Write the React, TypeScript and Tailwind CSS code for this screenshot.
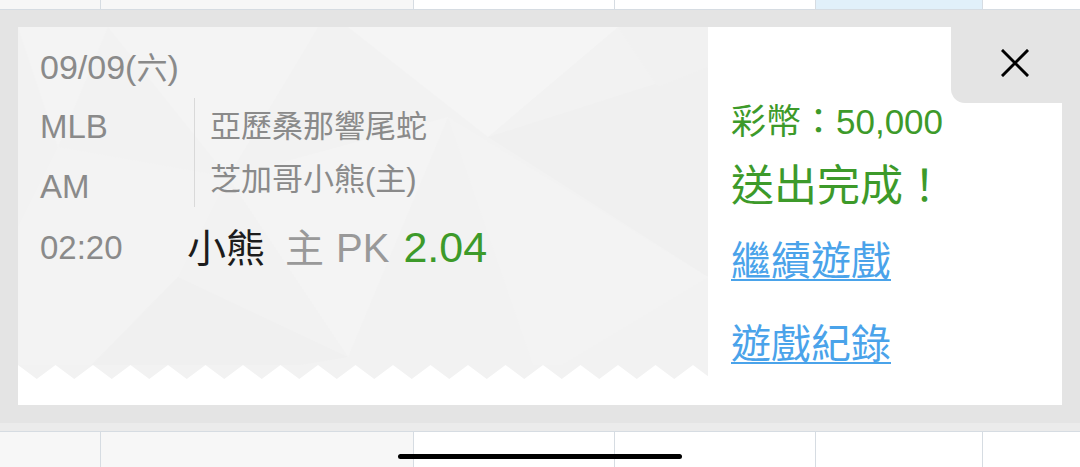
import React from "react";

const font = { fontFamily: '"Liberation Sans", "Noto Sans CJK TC", sans-serif' };

const topCells = [
  "w-[100px] bg-[#f7f7f7]",
  "w-[313px] bg-[#f7f7f7] border-l border-[#d6dce2]",
  "w-[201px] bg-white border-l border-[#d6dce2]",
  "w-[201px] bg-white border-l border-[#d6dce2]",
  "w-[167px] bg-[#e1f0fa] border-l border-[#d6dce2]",
  "flex-1 bg-white border-l border-[#d6dce2]",
];

const bottomCells = [
  "w-[100px] bg-[#f7f7f7]",
  "w-[313px] bg-[#f7f7f7] border-l border-[#d6dce2]",
  "w-[201px] bg-white border-l border-[#d6dce2]",
  "w-[201px] bg-white border-l border-[#d6dce2]",
  "w-[167px] bg-white border-l border-[#d6dce2]",
  "flex-1 bg-white border-l border-[#d6dce2]",
];

// faint low-poly texture behind the ticket
function PolyTexture() {
  return (
    <svg className="absolute inset-0" width="690" height="352" viewBox="0 0 690 352">
      <rect width="690" height="352" fill="#f2f2f2" />
      <polygon points="0,0 90,0 40,120" fill="#f4f4f4" />
      <polygon points="90,0 300,0 210,150" fill="#f4f4f4" />
      <polygon points="210,150 430,90 330,330" fill="#f4f4f4" />
      <polygon points="330,0 600,0 470,110" fill="#f5f5f5" />
      <polygon points="470,110 690,40 690,250" fill="#f0f0f0" />
      <polygon points="430,90 690,250 520,352" fill="#f3f3f3" />
      <polygon points="0,200 160,250 60,352 0,352" fill="#f3f3f3" />
      <polygon points="160,250 330,330 200,352 60,352" fill="#f0f0f0" />
      <polygon points="600,0 690,0 690,40 640,60" fill="#f1f1f1" />
      <polygon points="40,120 210,150 160,250 0,200" fill="#f3f3f3" />
    </svg>
  );
}

function Zigzag() {
  const p = 37.5;
  const teeth = Array.from({ length: 20 }, (_, k) => `${k * p - p / 2},14 ${k * p},0 ${k * p + p / 2},14`).join(" ");
  return (
    <svg width="690" height="14" viewBox="0 0 690 14" className="block">
      <rect width="690" height="14" fill="#f2f2f2" />
      <polygon points={`0,14 ${teeth} 690,14`} fill="#ffffff" />
    </svg>
  );
}

export default function App() {
  return (
    <div className="relative w-[1080px] h-[467px] overflow-hidden bg-[#e4e4e4]" style={font}>
      {/* table row behind the overlay */}
      <div className="flex h-[10px] border-b border-[#d6dce2]">
        {topCells.map((c, i) => (
          <div key={i} className={c} />
        ))}
      </div>

      {/* backdrop with the result card */}
      <div className="px-[18px] pt-[17px] pb-[18px]">
        <div className="relative flex h-[378px] bg-white">
          {/* ticket */}
          <div className="flex flex-col w-[690px]">
            <div className="relative h-[338px] pl-[22px]">
              <div className="absolute inset-0 overflow-hidden">
                <PolyTexture />
              </div>
              <div className="relative text-[#8a8a8a]">
                <div className="pt-[20px] h-[60px] leading-[40px] text-[34px]">
                  09/09(<span className="text-[31px]">六</span>)
                </div>
                <div className="flex mt-[10px]">
                  <div className="w-[154px] text-[33px]">
                    <div className="leading-[60px]">MLB</div>
                    <div className="leading-[60px]">AM</div>
                  </div>
                  <div className="mt-[1px] h-[109px] border-l border-[#d9d9d9]" />
                  <div className="pl-[15px] pt-[3px] text-[31px]">
                    <div className="leading-[53px]">亞歷桑那響尾蛇</div>
                    <div className="leading-[53px]">芝加哥小熊(主)</div>
                  </div>
                </div>
                <div className="flex items-center h-[62px]">
                  <div className="w-[147px] text-[33px]">02:20</div>
                  <div className="flex items-baseline leading-[62px] whitespace-nowrap">
                    <span className="text-[39px] text-[#1c1c1c]">小熊</span>
                    <span className="ml-[20px] text-[39px] text-[#999999]">主</span>
                    <span className="ml-[12px] text-[40px] text-[#999999]">PK</span>
                    <span className="ml-[14px] text-[43px] text-[#3d9a2a]">2.04</span>
                  </div>
                </div>
              </div>
            </div>
            <Zigzag />
            <div className="h-[26px] bg-white" />
          </div>

          {/* result */}
          <div className="flex-1 pl-[23px] pt-[73px]">
            <div className="leading-[44px] text-[35px] text-[#3d9a2a] whitespace-nowrap">彩幣：50,000</div>
            <div className="mt-[14px] leading-[56px] text-[43px] text-[#3d9a2a] whitespace-nowrap">送出完成！</div>
            <a className="block w-fit mt-[19px] leading-[56px] text-[40px] text-[#4aa3ea] underline decoration-2 underline-offset-4">繼續遊戲</a>
            <a className="block w-fit mt-[27px] leading-[56px] text-[40px] text-[#4aa3ea] underline decoration-2 underline-offset-4">遊戲紀錄</a>
          </div>

          {/* close tab */}
          <div className="absolute right-0 top-0 w-[111px] h-[76px] bg-[#e4e4e4] rounded-bl-[14px] pl-[50px] pt-[22px]">
            <svg width="28" height="28" viewBox="0 0 28 28">
              <path d="M2 2 L26 26 M26 2 L2 26" stroke="#000" strokeWidth="3" strokeLinecap="square" />
            </svg>
          </div>
        </div>
      </div>

      <div className="h-[8px] bg-[#ebebeb]" />
      <div className="flex h-[36px] border-t border-[#d6dce2]">
        {bottomCells.map((c, i) => (
          <div key={i} className={c} />
        ))}
      </div>

      {/* home indicator */}
      <div className="absolute left-[398px] top-[454px] w-[284px] h-[5px] rounded-full bg-black" />
    </div>
  );
}
